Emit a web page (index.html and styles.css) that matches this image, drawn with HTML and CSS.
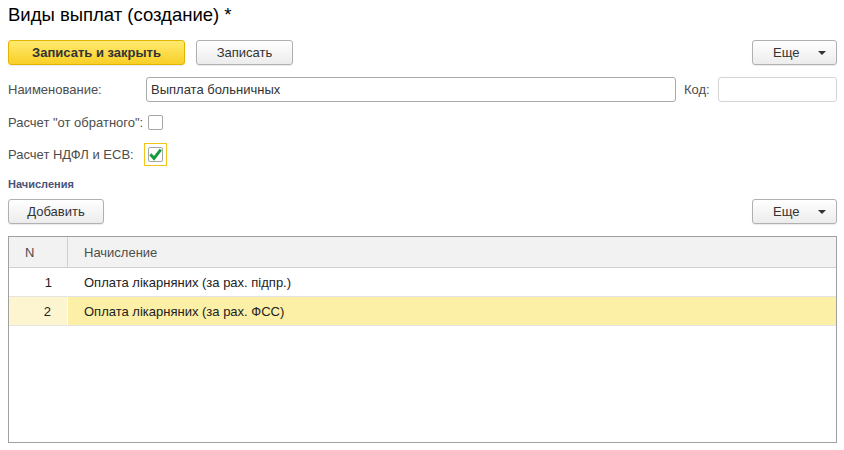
FILE: index.html
```html
<!DOCTYPE html>
<html lang="ru">
<head>
<meta charset="utf-8">
<title>Виды выплат (создание)</title>
<link rel="stylesheet" href="styles.css">
</head>
<body>
<div class="page">
  <h1 class="title">Виды выплат (создание) *</h1>

  <div class="toolbar">
    <button class="btn btn-primary btn-save-close">Записать и закрыть</button>
    <button class="btn btn-save">Записать</button>
    <div class="spacer"></div>
    <button class="btn btn-more">Еще<span class="caret"></span></button>
  </div>

  <div class="form-row">
    <label class="label label-main">Наименование:</label>
    <div class="input input-name">Выплата больничных</div>
    <label class="label label-code">Код:</label>
    <div class="input input-code"></div>
  </div>

  <div class="check-row">
    <label class="label label-main">Расчет "от обратного":</label>
    <div class="check-wrap"><span class="checkbox"></span></div>
  </div>

  <div class="check-row check-row-2">
    <label class="label label-main">Расчет НДФЛ и ЕСВ:</label>
    <div class="check-wrap focused"><span class="checkbox"><svg viewBox="0 0 15 15" width="15" height="15"><path d="M2.4 7.2 L6 11.4 L12.8 2.6" fill="none" stroke="#16993b" stroke-width="2.9" stroke-linecap="butt" stroke-linejoin="miter"/></svg></span></div>
  </div>

  <div class="group-title">Начисления</div>

  <div class="toolbar toolbar-2">
    <button class="btn btn-add">Добавить</button>
    <div class="spacer"></div>
    <button class="btn btn-more">Еще<span class="caret"></span></button>
  </div>

  <div class="table">
    <div class="tr th">
      <div class="td col-n">N</div>
      <div class="td col-name">Начисление</div>
    </div>
    <div class="tr row">
      <div class="td col-n num">1</div>
      <div class="td col-name">Оплата лікарняних (за рах. підпр.)</div>
    </div>
    <div class="tr row selected">
      <div class="td col-n num">2</div>
      <div class="td col-name">Оплата лікарняних (за рах. ФСС)</div>
    </div>
  </div>
</div>
</body>
</html>
```

FILE: styles.css
```css
* { box-sizing: border-box; }
html, body { margin: 0; padding: 0; background: #fff; }
body {
  font-family: "Liberation Sans", Arial, sans-serif;
  font-size: 13px;
  color: #333;
}
.page {
  width: 844px;
  height: 450px;
  padding: 5px 7px 0 8px;
  display: flex;
  flex-direction: column;
}
.title {
  margin: 0;
  font-size: 18.5px;
  line-height: 20px;
  font-weight: normal;
  color: #000;
}
.toolbar {
  display: flex;
  align-items: center;
  height: 25px;
  margin-top: 15px;
}
.toolbar-2 { margin-top: 8px; }
.spacer { flex: 1; }
.btn {
  height: 25px;
  padding: 0;
  border: 1px solid #b0b0b0;
  border-radius: 3px;
  background: linear-gradient(#ffffff, #ececec);
  font-family: inherit;
  font-size: 13px;
  color: #333;
  display: flex;
  align-items: center;
  justify-content: center;
  box-shadow: 0 1px 1px rgba(0,0,0,0.08);
}
.btn-primary {
  background: linear-gradient(#ffea70, #f9cf27);
  border-color: #e2b500;
  font-weight: bold;
  color: #333;
}
.btn-save-close { width: 177px; }
.btn-save { width: 97px; margin-left: 11px; }
.btn-add { width: 96px; }
.btn-more {
  width: 85px;
  justify-content: flex-start;
  padding-left: 20px;
  position: relative;
}
.caret {
  position: absolute;
  right: 10px;
  top: 10px;
  width: 0;
  height: 0;
  border-left: 4px solid transparent;
  border-right: 4px solid transparent;
  border-top: 4px solid #333;
}
.form-row {
  display: flex;
  align-items: center;
  height: 25px;
  margin-top: 12px;
}
.label {
  color: #4d4d4d;
  white-space: nowrap;
}
.label-main { width: 138px; flex: none; }
.input {
  height: 25px;
  border: 1px solid #a9a9a9;
  border-radius: 3px;
  background: #fff;
  padding: 0 4px;
  line-height: 23px;
  color: #333;
}
.input-name { flex: 1; }
.label-code { margin-left: 8px; width: 34px; }
.input-code { width: 119px; flex: none; border-color: #d4d4d4; }
.check-row {
  display: flex;
  align-items: center;
  height: 23px;
  margin-top: 9px;
}
.check-row-2 { margin-top: 9px; }
.check-wrap {
  width: 23px;
  height: 23px;
  border: 1px solid transparent;
  margin-left: -2px;
  padding: 3px;
}
.check-wrap.focused { border-color: #f3c51c; }
.checkbox {
  display: block;
  width: 15px;
  height: 15px;
  border: 1px solid #a6a6a6;
  border-radius: 2px;
  background: #fff;
  position: relative;
}
.checkbox svg { position: absolute; left: -1px; top: -1px; }
.group-title {
  margin-top: 12px;
  font-size: 11px;
  line-height: 13px;
  font-weight: bold;
  color: #4a5279;
}
.table {
  margin-top: 12px;
  height: 207px;
  border: 1px solid #a0a0a0;
  display: flex;
  flex-direction: column;
}
.tr {
  display: flex;
  height: 29px;
  border-bottom: 1px solid #e4e4e4;
}
.th {
  height: 31px;
  background: #f2f2f2;
  border-bottom: 1px solid #d0d0d0;
  color: #4d4d4d;
}
.td {
  display: flex;
  align-items: center;
  white-space: nowrap;
}
.col-n {
  width: 59px;
  flex: none;
  padding-left: 16px;
}
.th .col-n { border-right: 1px solid #d0d0d0; }
.col-name { flex: 1; padding-left: 16px; }
.row { color: #222; }
.num { justify-content: flex-end; padding-right: 16px; padding-left: 0; }
.selected .col-n { background: #fdf5cf; }
.selected .col-name { background: #fcefa6; }
.selected .col-n { border-right: 1px solid #fff; }
```
